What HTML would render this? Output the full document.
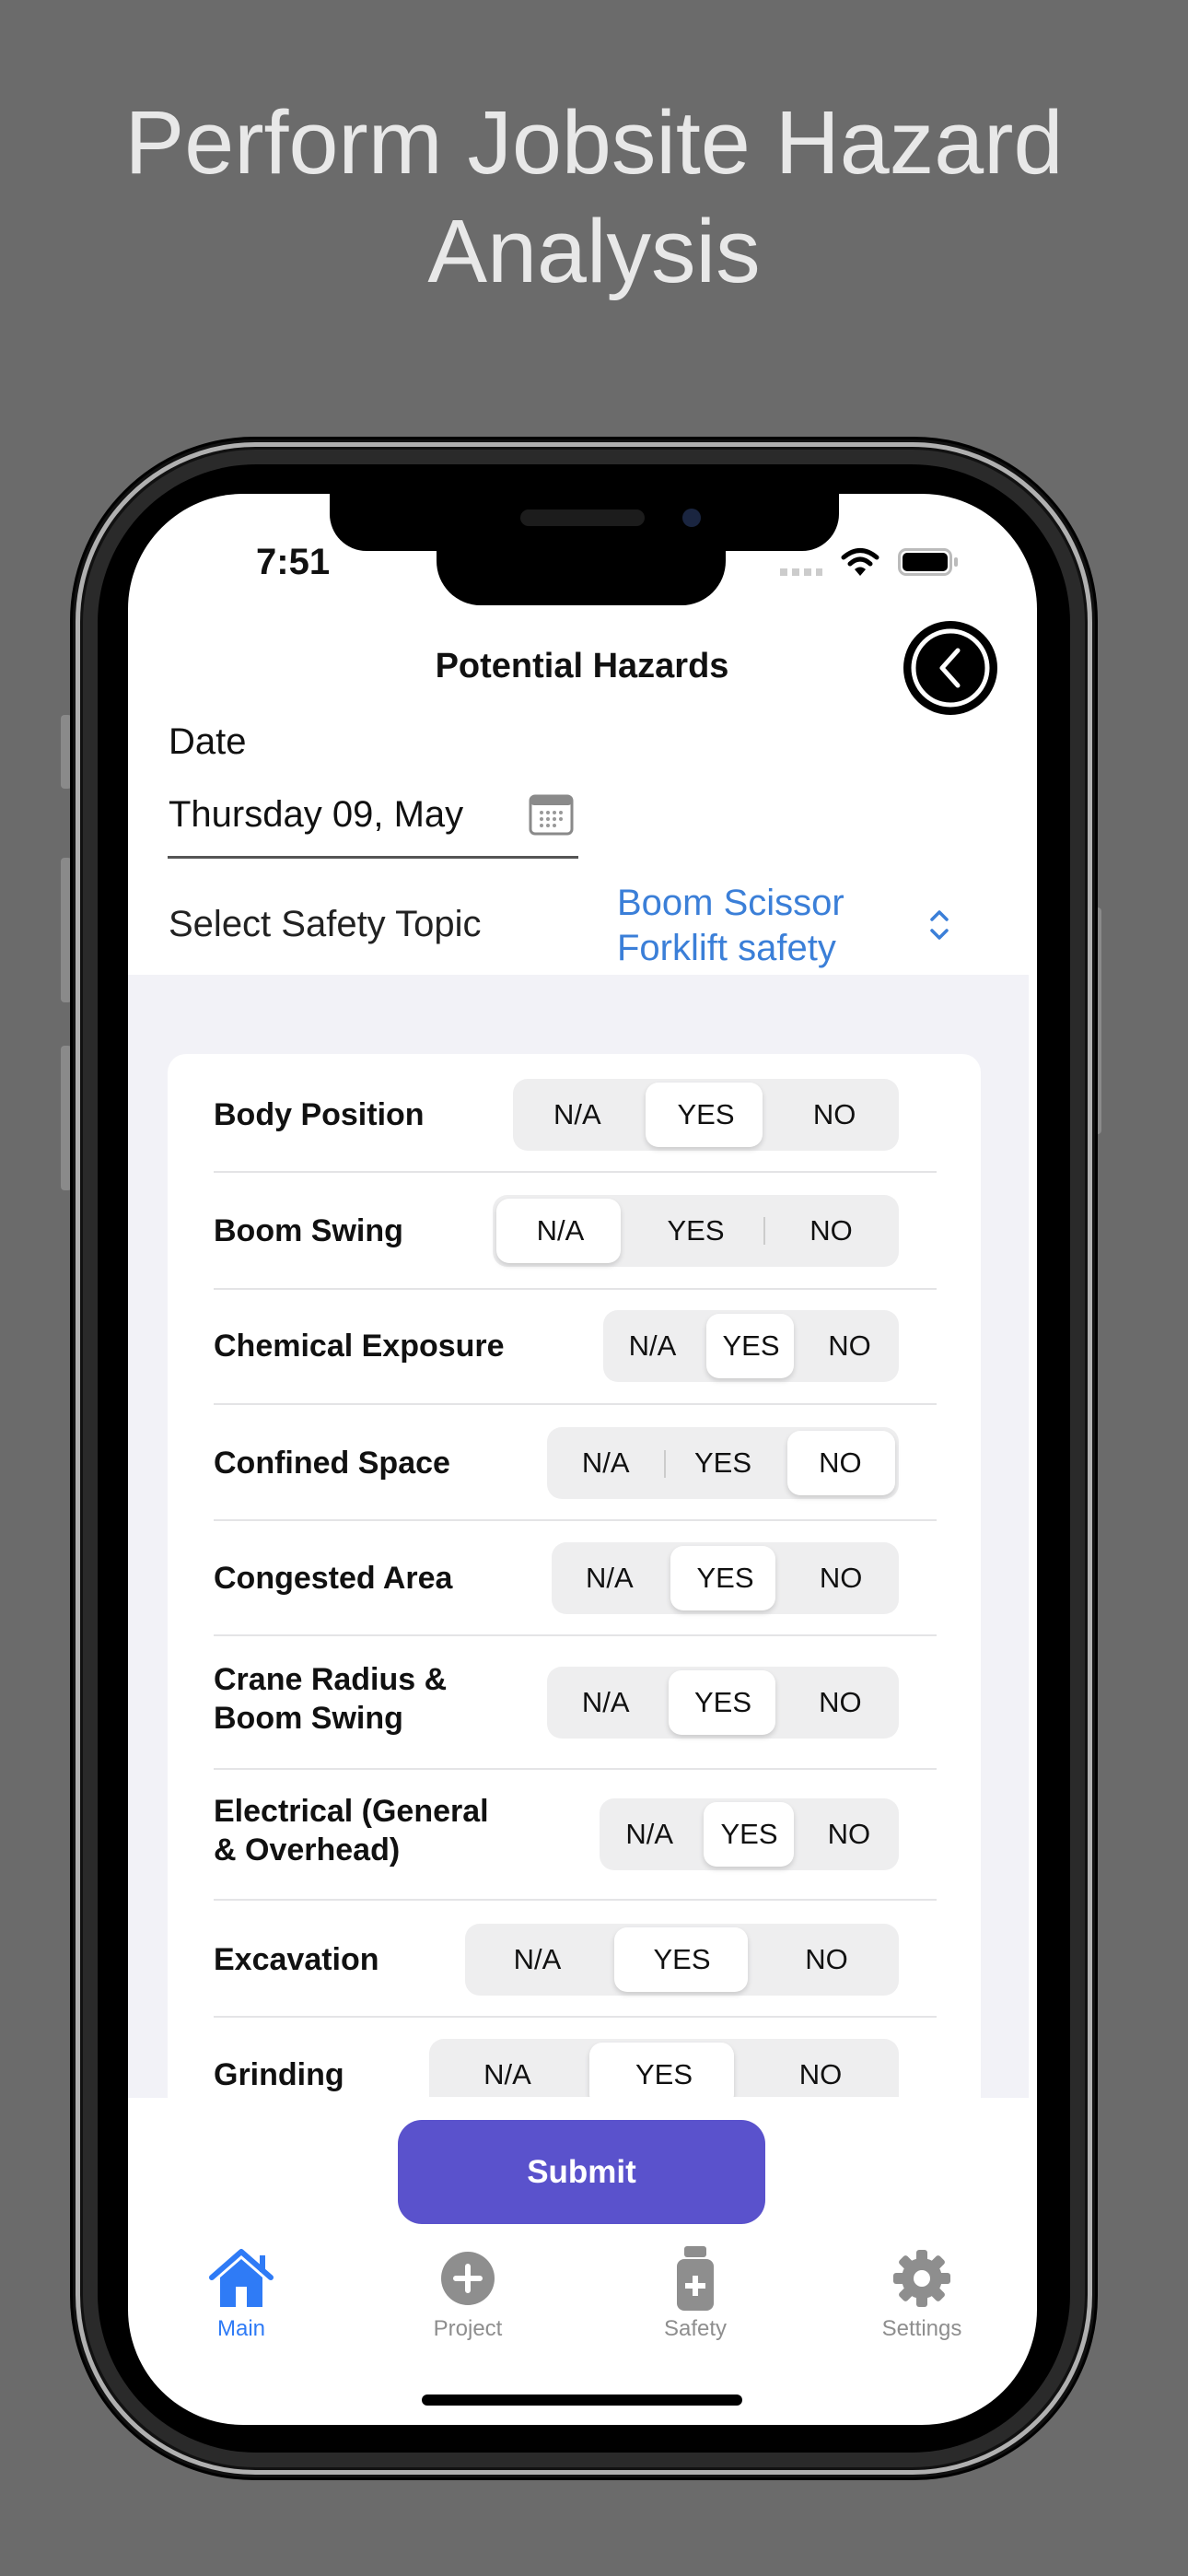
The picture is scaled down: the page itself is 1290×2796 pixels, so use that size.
<!DOCTYPE html>
<html><head><meta charset="utf-8">
<style>
*{margin:0;padding:0;box-sizing:border-box}
body{width:1290px;height:2796px;background:#6b6b6b;position:relative;overflow:hidden;font-family:"Liberation Sans",sans-serif}
.abs{position:absolute}
.title{left:0;width:1290px;text-align:center;color:#e8e8e8;font-size:97px;line-height:118px}
.lbl{position:absolute;left:232px;font-size:34px;font-weight:bold;color:#111;line-height:42px}
.sep{position:absolute;left:232px;width:785px;height:2px;background:#e4e4e6}
.seg{position:absolute;right:314px;height:78px;background:#eeeeef;border-radius:16px;display:flex}
.seg div{flex:1;text-align:center;line-height:78px;font-size:31px;color:#111;position:relative;z-index:1}
.sel{position:absolute;top:4px;height:70px;background:#fff;border-radius:14px;box-shadow:0 3px 6px rgba(0,0,0,.15);z-index:0}
.tab{position:absolute;width:200px;text-align:center;font-size:24px;color:#8e8e8e}
</style></head><body>
<div class="abs title" style="top:96px">Perform Jobsite Hazard</div>
<div class="abs title" style="top:214px">Analysis</div>

<div class="abs" style="left:66px;top:776px;width:12px;height:80px;background:#8a8a8a;border-radius:4px"></div>
<div class="abs" style="left:66px;top:931px;width:12px;height:157px;background:#8a8a8a;border-radius:4px"></div>
<div class="abs" style="left:66px;top:1135px;width:12px;height:157px;background:#8a8a8a;border-radius:4px"></div>
<div class="abs" style="left:1184px;top:985px;width:12px;height:246px;background:#8a8a8a;border-radius:4px"></div>

<div class="abs" style="left:76px;top:474px;width:1116px;height:2218px;border-radius:200px;background:#111;border:3px solid #000"></div>
<div class="abs" style="left:82px;top:480px;width:1104px;height:2206px;border-radius:195px;border:5px solid #b0b0b0"></div>
<div class="abs" style="left:90px;top:488px;width:1088px;height:2190px;border-radius:188px;background:#2a2a2a"></div>
<div class="abs" style="left:106px;top:504px;width:1056px;height:2158px;border-radius:172px;background:#000"></div>

<div class="abs" style="left:139px;top:536px;width:987px;height:2096px;border-radius:125px;background:#fff;overflow:hidden">
  <div class="abs" style="left:0;top:522px;width:978px;height:1219px;background:#f2f2f7"></div>
  <div class="abs" style="left:43px;top:608px;width:883px;height:1200px;background:#fff;border-radius:20px"></div>
</div>

<div class="abs" style="left:358px;top:530px;width:553px;height:68px;background:#000;border-radius:0 0 40px 40px"></div>
<div class="abs" style="left:474px;top:530px;width:314px;height:127px;background:#000;border-radius:0 0 48px 48px"></div>
<div class="abs" style="left:565px;top:553px;width:135px;height:18px;background:#1c1c1c;border-radius:9px"></div>
<div class="abs" style="left:741px;top:552px;width:20px;height:20px;background:#1a2540;border-radius:50%"></div>

<div class="abs" style="left:278px;top:588px;font-size:40px;font-weight:bold;color:#111">7:51</div>
<div class="abs" style="left:847px;top:617px;width:46px;height:8px;background:repeating-linear-gradient(90deg,#ccc 0 8px,transparent 8px 13px)"></div>
<svg class="abs" style="left:913px;top:594px" width="42" height="32" viewBox="0 0 42 32"><path d="M3 11 Q21 -4 39 11" stroke="#000" stroke-width="5" fill="none" stroke-linecap="round"/><path d="M10 18 Q21 8 32 18" stroke="#000" stroke-width="5" fill="none" stroke-linecap="round"/><path d="M15 24 L21 31 L27 24 Q21 19 15 24Z" fill="#000"/></svg>
<div class="abs" style="left:975px;top:595px;width:59px;height:30px;border:3px solid #bbb;border-radius:9px;padding:2px"><div style="width:100%;height:100%;background:#000;border-radius:5px"></div></div>
<div class="abs" style="left:1036px;top:605px;width:4px;height:10px;background:#bbb;border-radius:2px"></div>

<div class="abs" style="left:332px;width:600px;text-align:center;top:702px;font-size:38px;font-weight:bold;color:#111">Potential Hazards</div>
<svg class="abs" style="left:980px;top:673px" width="104" height="104" viewBox="0 0 104 104"><circle cx="52" cy="52" r="51" fill="#000"/><circle cx="52" cy="52" r="40" fill="none" stroke="#fff" stroke-width="5"/><path d="M60 33 L43 52 L60 71" stroke="#fff" stroke-width="5" fill="none" stroke-linecap="round" stroke-linejoin="round"/></svg>

<div class="abs" style="left:183px;top:783px;font-size:40px;color:#111">Date</div>
<div class="abs" style="left:183px;top:862px;font-size:40px;color:#111">Thursday 09, May</div>
<svg class="abs" style="left:574px;top:862px" width="49" height="45" viewBox="0 0 49 45"><rect x="2" y="2" width="45" height="41" rx="5" fill="#fff" stroke="#8a8a8a" stroke-width="3"/><rect x="2" y="2" width="45" height="10" rx="4" fill="#8a8a8a"/><g fill="#999"><circle cx="14" cy="20" r="2"/><circle cx="21" cy="20" r="2"/><circle cx="28" cy="20" r="2"/><circle cx="35" cy="20" r="2"/><circle cx="14" cy="27" r="2"/><circle cx="21" cy="27" r="2"/><circle cx="28" cy="27" r="2"/><circle cx="35" cy="27" r="2"/><circle cx="14" cy="34" r="2"/><circle cx="21" cy="34" r="2"/><circle cx="28" cy="34" r="2"/></g></svg>
<div class="abs" style="left:182px;top:929px;width:446px;height:3px;background:#555"></div>
<div class="abs" style="left:183px;top:981px;font-size:40px;color:#222">Select Safety Topic</div>
<div class="abs" style="left:670px;top:956px;font-size:40px;line-height:49px;color:#3b7fd8">Boom Scissor<br>Forklift safety</div>
<svg class="abs" style="left:1008px;top:985px" width="24" height="38" viewBox="0 0 24 38"><path d="M4 13 L12 5 L20 13 M4 25 L12 33 L20 25" stroke="#3b7fd8" stroke-width="3.5" fill="none" stroke-linecap="round" stroke-linejoin="round"/></svg>

<div class="lbl" style="top:1189px">Body Position</div>
<div class="seg" style="left:557px;top:1171px"><span class="sel" style="left:144px;width:127px"></span><div>N/A</div><div>YES</div><div>NO</div></div>
<div class="sep" style="top:1271px"></div>

<div class="lbl" style="top:1315px">Boom Swing</div>
<div class="seg" style="left:535px;top:1297px"><span class="sel" style="left:4px;width:135px"></span><div>N/A</div><div>YES</div><div>NO</div></div>
<div class="abs" style="left:829px;top:1321px;width:2px;height:30px;background:#ccc"></div>
<div class="sep" style="top:1398px"></div>

<div class="lbl" style="top:1440px">Chemical Exposure</div>
<div class="seg" style="left:655px;top:1422px"><span class="sel" style="left:112px;width:95px"></span><div>N/A</div><div>YES</div><div>NO</div></div>
<div class="sep" style="top:1523px"></div>

<div class="lbl" style="top:1567px">Confined Space</div>
<div class="seg" style="left:594px;top:1549px"><span class="sel" style="left:261px;width:117px"></span><div>N/A</div><div>YES</div><div>NO</div></div>
<div class="abs" style="left:721px;top:1574px;width:2px;height:30px;background:#ccc"></div>
<div class="sep" style="top:1649px"></div>

<div class="lbl" style="top:1692px">Congested Area</div>
<div class="seg" style="left:599px;top:1674px"><span class="sel" style="left:129px;width:114px"></span><div>N/A</div><div>YES</div><div>NO</div></div>
<div class="sep" style="top:1774px"></div>

<div class="lbl" style="top:1802px">Crane Radius &amp;<br>Boom Swing</div>
<div class="seg" style="left:594px;top:1809px"><span class="sel" style="left:132px;width:116px"></span><div>N/A</div><div>YES</div><div>NO</div></div>
<div class="sep" style="top:1919px"></div>

<div class="lbl" style="top:1945px">Electrical (General<br>&amp; Overhead)</div>
<div class="seg" style="left:651px;top:1952px"><span class="sel" style="left:113px;width:98px"></span><div>N/A</div><div>YES</div><div>NO</div></div>
<div class="sep" style="top:2061px"></div>

<div class="lbl" style="top:2106px">Excavation</div>
<div class="seg" style="left:505px;top:2088px"><span class="sel" style="left:162px;width:145px"></span><div>N/A</div><div>YES</div><div>NO</div></div>
<div class="sep" style="top:2188px"></div>

<div class="abs" style="left:139px;top:2210px;width:987px;height:66px;overflow:hidden">
  <div class="lbl" style="left:93px;top:21px">Grinding</div>
  <div class="seg" style="left:327px;right:auto;width:510px;top:3px"><span class="sel" style="left:174px;width:157px"></span><div>N/A</div><div>YES</div><div>NO</div></div>
</div>

<div class="abs" style="left:432px;top:2301px;width:399px;height:113px;background:#5a52cc;border-radius:26px;color:#fff;text-align:center;line-height:113px;font-size:35px;font-weight:bold">Submit</div>

<svg class="abs" style="left:226px;top:2438px" width="72" height="68" viewBox="0 0 72 68"><path d="M4 34 L36 6 L68 34" stroke="#2f7bf6" stroke-width="6" fill="none" stroke-linecap="round" stroke-linejoin="round"/><rect x="56" y="10" width="6" height="18" fill="#2f7bf6"/><path d="M13 34 L36 14 L59 34 V66 H13Z" fill="#2f7bf6"/><rect x="30" y="44" width="12" height="22" fill="#fff"/></svg>
<div class="tab" style="left:162px;top:2514px;color:#2f7bf6">Main</div>
<svg class="abs" style="left:478px;top:2443px" width="60" height="60" viewBox="0 0 60 60"><circle cx="30" cy="30" r="29" fill="#8e8e8e"/><path d="M30 17 V43 M17 30 H43" stroke="#fff" stroke-width="6" stroke-linecap="round"/></svg>
<div class="tab" style="left:408px;top:2514px">Project</div>
<svg class="abs" style="left:733px;top:2438px" width="44" height="70" viewBox="0 0 44 70"><rect x="10" y="0" width="24" height="12" rx="3" fill="#8e8e8e"/><rect x="2" y="14" width="40" height="56" rx="8" fill="#8e8e8e"/><path d="M22 32 V54 M11 43 H33" stroke="#fff" stroke-width="6"/></svg>
<div class="tab" style="left:655px;top:2514px">Safety</div>
<svg class="abs" style="left:970px;top:2442px" width="62" height="62" viewBox="0 0 62 62"><g fill="#8e8e8e" transform="translate(31 31)"><circle r="22"/><rect x="-6" y="-31" width="12" height="62" rx="3"/><rect x="-6" y="-31" width="12" height="62" rx="3" transform="rotate(45)"/><rect x="-6" y="-31" width="12" height="62" rx="3" transform="rotate(90)"/><rect x="-6" y="-31" width="12" height="62" rx="3" transform="rotate(135)"/></g><circle cx="31" cy="31" r="9" fill="#fff"/></svg>
<div class="tab" style="left:901px;top:2514px">Settings</div>

<div class="abs" style="left:458px;top:2599px;width:348px;height:12px;background:#000;border-radius:6px"></div>
</body></html>
